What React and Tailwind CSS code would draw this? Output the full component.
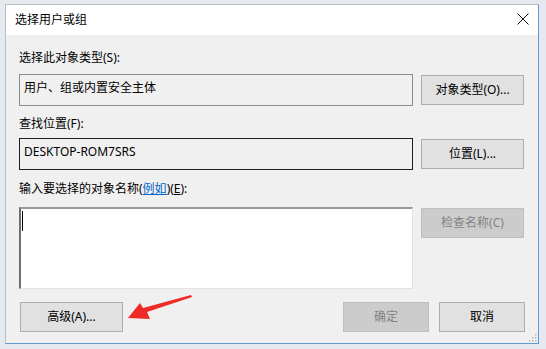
import React from 'react';

const Btn = ({ children, disabled, className = '' }) => (
    <div
        className={`flex items-center justify-center h-[30px] border text-[12px] leading-[16px] ${
            disabled
                ? 'bg-[#cccccc] border-[#bfbfbf] text-[#838383]'
                : 'bg-[#e1e1e1] border-[#adadad] text-black'
        } ${className}`}
    >
        {children}
    </div>
);

const SelectUserDialog = () => {
    return (
        <div className="relative w-[546px] h-[349px] overflow-hidden bg-[#e6e9ed] pt-[4px] pl-[5px] font-['Noto_Sans','Noto_Sans_CJK_SC',sans-serif] text-[12px] leading-[16px] text-black">
            {/* 窗口 */}
            <div className="relative flex flex-col w-[534px] h-[340px] bg-[#f0f0f0] border border-[#5f9ad6] border-l-[#b4bec8] border-t-[#b4bec8]">
                {/* 标题栏 */}
                <div className="flex items-center justify-between h-[30px] shrink-0 bg-white pl-[9px] pr-[9px]">
                    <span>选择用户或组</span>
                    <svg width="12" height="12" viewBox="0 0 12 12" className="mt-[-2px]">
                        <path d="M0.5 0.5 L11.5 11.5 M11.5 0.5 L0.5 11.5" stroke="#111" strokeWidth="1" />
                    </svg>
                </div>

                {/* 内容 */}
                <div className="flex flex-col flex-1 px-[13px] pt-[15px]">
                    <div>选择此对象类型(S):</div>
                    <div className="flex items-start gap-[8px] mt-[8px]">
                        <div className="w-[394px] h-[32px] border border-[#8c8c8c] bg-[#f0f0f0] px-[4px] pt-[5px]">
                            用户、组或内置安全主体
                        </div>
                        <Btn className="w-[103px] mt-[1px]">对象类型(O)...</Btn>
                    </div>

                    <div className="mt-[10px]">查找位置(F):</div>
                    <div className="flex items-center gap-[8px] mt-[6px]">
                        <div className="w-[394px] h-[32px] border border-[#1e1e1e] bg-[#f0f0f0] px-[4px] pt-[5px]">
                            DESKTOP-ROM7SRS
                        </div>
                        <Btn className="w-[103px]">位置(L)...</Btn>
                    </div>

                    <div className="mt-[11px]">
                        输入要选择的对象名称(
                        <span className="text-[#0066cc] underline">例如</span>
                        )(<span className="underline">E</span>):
                    </div>
                    <div className="flex items-start gap-[8px] mt-[10px]">
                        <div className="w-[394px] h-[82px] bg-white border-t-[2px] border-l-[2px] border-r border-b border-t-[#9a9a9a] border-l-[#6e6e6e] border-r-[#e3e3e3] border-b-[#e3e3e3] pl-[1px] pt-[2px]">
                            <div className="w-px h-[20px] bg-black" />
                        </div>
                        <Btn disabled className="w-[103px] mt-[1px]">检查名称(C)</Btn>
                    </div>

                    <div className="flex items-center mt-[13px]">
                        <Btn className="w-[103px] ml-[1px]">高级(A)...</Btn>
                        <div className="flex-1" />
                        <Btn disabled className="w-[86px]">确定</Btn>
                        <Btn className="w-[86px] ml-[10px]">取消</Btn>
                    </div>
                </div>

                {/* 调整大小手柄 */}
                <svg width="8" height="8" viewBox="0 0 8 8" className="absolute right-[1px] bottom-[1px]">
                    <rect x="6" y="0" width="1.5" height="1.5" fill="#b8b8b8" />
                    <rect x="3" y="3" width="1.5" height="1.5" fill="#b8b8b8" />
                    <rect x="6" y="3" width="1.5" height="1.5" fill="#b8b8b8" />
                    <rect x="0" y="6" width="1.5" height="1.5" fill="#b8b8b8" />
                    <rect x="3" y="6" width="1.5" height="1.5" fill="#b8b8b8" />
                    <rect x="6" y="6" width="1.5" height="1.5" fill="#b8b8b8" />
                </svg>
            </div>

            {/* 红色箭头 */}
            <svg width="546" height="349" className="absolute left-0 top-0 pointer-events-none">
                <polygon
                    points="191,295 192,297 147,312 150,319 128,318 140,303 143,308"
                    fill="#ee2b25"
                />
            </svg>
        </div>
    );
};

export default SelectUserDialog;
